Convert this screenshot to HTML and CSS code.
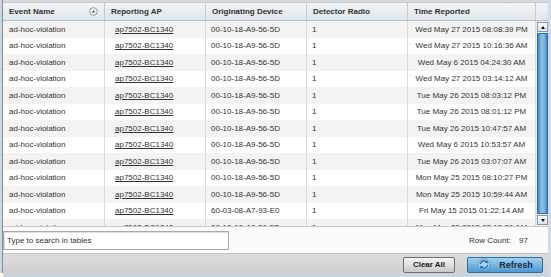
FILE: index.html
```html
<!DOCTYPE html>
<html lang="en">

<head>
    <meta charset="UTF-8">
    <title>Events</title>
    <link rel="stylesheet" href="styles.css">
</head>

<body>
    <div class="frame">
        <div class="edge"></div>
        <div class="main">
            <!-- Events table -->
            <div class="grid">
                <div class="thead">
                    <div class="th">Event Name
                        <svg class="sort" width="9" height="9" viewBox="0 0 9 9">
                            <circle cx="4.5" cy="4.5" r="3.8" fill="#f4f6f8" stroke="#7d858c" stroke-width="0.8" />
                            <path d="M2.7 5.4 L4.5 3.2 L6.3 5.4 Z" fill="#4a4f54" />
                        </svg>
                    </div>
                    <div class="th">Reporting AP</div>
                    <div class="th">Originating Device</div>
                    <div class="th">Detector Radio</div>
                    <div class="th">Time Reported</div>
                    <div class="th th-scroll"></div>
                </div>
                <div class="tbody">
                    <div class="rows">
                        <div class="tr"><span>ad-hoc-violation</span><span class="ap"><a href="#">ap7502-BC1340</a></span><span>00-10-18-A9-56-5D</span><span>1</span><span class="time">Wed May 27 2015 08:08:39 PM</span></div>
                        <div class="tr"><span>ad-hoc-violation</span><span class="ap"><a href="#">ap7502-BC1340</a></span><span>00-10-18-A9-56-5D</span><span>1</span><span class="time">Wed May 27 2015 10:16:36 AM</span></div>
                        <div class="tr"><span>ad-hoc-violation</span><span class="ap"><a href="#">ap7502-BC1340</a></span><span>00-10-18-A9-56-5D</span><span>1</span><span class="time">Wed May 6 2015 04:24:30 AM</span></div>
                        <div class="tr"><span>ad-hoc-violation</span><span class="ap"><a href="#">ap7502-BC1340</a></span><span>00-10-18-A9-56-5D</span><span>1</span><span class="time">Wed May 27 2015 03:14:12 AM</span></div>
                        <div class="tr"><span>ad-hoc-violation</span><span class="ap"><a href="#">ap7502-BC1340</a></span><span>00-10-18-A9-56-5D</span><span>1</span><span class="time">Tue May 26 2015 08:03:12 PM</span></div>
                        <div class="tr"><span>ad-hoc-violation</span><span class="ap"><a href="#">ap7502-BC1340</a></span><span>00-10-18-A9-56-5D</span><span>1</span><span class="time">Tue May 26 2015 08:01:12 PM</span></div>
                        <div class="tr"><span>ad-hoc-violation</span><span class="ap"><a href="#">ap7502-BC1340</a></span><span>00-10-18-A9-56-5D</span><span>1</span><span class="time">Tue May 26 2015 10:47:57 AM</span></div>
                        <div class="tr"><span>ad-hoc-violation</span><span class="ap"><a href="#">ap7502-BC1340</a></span><span>00-10-18-A9-56-5D</span><span>1</span><span class="time">Wed May 6 2015 10:53:57 AM</span></div>
                        <div class="tr"><span>ad-hoc-violation</span><span class="ap"><a href="#">ap7502-BC1340</a></span><span>00-10-18-A9-56-5D</span><span>1</span><span class="time">Tue May 26 2015 03:07:07 AM</span></div>
                        <div class="tr"><span>ad-hoc-violation</span><span class="ap"><a href="#">ap7502-BC1340</a></span><span>00-10-18-A9-56-5D</span><span>1</span><span class="time">Mon May 25 2015 08:10:27 PM</span></div>
                        <div class="tr"><span>ad-hoc-violation</span><span class="ap"><a href="#">ap7502-BC1340</a></span><span>00-10-18-A9-56-5D</span><span>1</span><span class="time">Mon May 25 2015 10:59:44 AM</span></div>
                        <div class="tr"><span>ad-hoc-violation</span><span class="ap"><a href="#">ap7502-BC1340</a></span><span>60-03-08-A7-93-E0</span><span>1</span><span class="time">Fri May 15 2015 01:22:14 AM</span></div>
                        <div class="tr"><span>ad-hoc-violation</span><span class="ap"><a href="#">ap7502-BC1340</a></span><span>00-10-18-A9-56-5D</span><span>1</span><span class="time">Mon May 25 2015 03:15:36 AM</span></div>
                    </div>
                    <!-- Scrollbar -->
                    <div class="scrollbar">
                        <div class="sb-btn"><span class="arrow-up"></span></div>
                        <div class="sb-thumb"></div>
                        <div class="sb-btn"><span class="arrow-down"></span></div>
                    </div>
                </div>
            </div>

            <!-- Search and count -->
            <div class="info">
                <input type="text" class="search" value="Type to search in tables">
                <div class="count">Row Count: <span class="count-num">97</span></div>
            </div>

            <!-- Buttons -->
            <div class="actions">
                <button class="btn btn-clear">Clear All</button>
                <button class="btn btn-refresh">
                    <svg width="14" height="13" viewBox="0 0 14 13">
                        <circle cx="7" cy="6.5" r="5.6" fill="#a9d3f2" stroke="#4f93c8" stroke-width="0.8" />
                        <path d="M3.4 6 A3.6 3.6 0 0 1 9.8 4.2" fill="none" stroke="#1f5f99" stroke-width="1.3" />
                        <path d="M10.8 2.6 L10.6 5.4 L8 4.6 Z" fill="#1f5f99" />
                        <path d="M10.6 7 A3.6 3.6 0 0 1 4.2 8.8" fill="none" stroke="#1f5f99" stroke-width="1.3" />
                        <path d="M3.2 10.4 L3.4 7.6 L6 8.4 Z" fill="#1f5f99" />
                    </svg>
                    Refresh
                </button>
            </div>
        </div>
    </div>
</body>

</html>
```

FILE: styles.css
```css
/* General page */
body {
    margin: 0;
    width: 551px;
    height: 277px;
    overflow: hidden;
    font-family: "Liberation Sans", Arial, sans-serif;
    font-size: 8px;
    color: #333;
    background-color: #fff;
}

.frame {
    display: flex;
    height: 277px;
}

.edge {
    width: 3px;
    background-color: #c9d8e4;
    border-right: 1px solid #8c8c8c;
    margin-bottom: 4px;
}

.main {
    flex: 1;
    display: flex;
    flex-direction: column;
    border-top: 2px solid #d6dadd;
    border-right: 3px solid #d3dce4;
    border-bottom: 2px solid #c3d6e5;
}

/* Table */
.grid {
    display: flex;
    flex-direction: column;
    border-top: 1px solid #c4c9cd;
    border-bottom: 1px solid #c8c8c8;
}

.thead,
.tr {
    display: grid;
    grid-template-columns: 102px 101px 101px 101px 128px;
}

.thead {
    grid-template-columns: 102px 101px 101px 101px 128px 11px;
    height: 17px;
    background: linear-gradient(#f1f4f7, #dfe6ec);
    border-bottom: 1px solid #b8c2cb;
}

.th {
    display: flex;
    align-items: center;
    justify-content: space-between;
    padding: 0 4px 0 6px;
    font-weight: bold;
    color: #333;
    border-right: 1px solid #c3ccd4;
}

.th-scroll {
    border-right: none;
    padding: 0;
}

.sort {
    margin-right: 2px;
}

.tbody {
    display: flex;
    height: 205px;
    overflow: hidden;
}

.rows {
    width: 533px;
}

.tr {
    height: 16.5px;
    align-items: center;
}

.tr:nth-child(odd) {
    background-color: #f3f3f3;
}

.tr span {
    height: 100%;
    display: flex;
    align-items: center;
    padding-left: 6px;
    border-right: 1px solid #dadada;
    white-space: nowrap;
}

.tr .ap {
    padding-left: 10px;
}

.tr span:nth-child(3),
.tr span:nth-child(4) {
    padding-left: 5px;
}

.tr .time {
    justify-content: center;
    padding-left: 0;
}

.ap a {
    color: #333;
    text-decoration: underline;
}

/* Scrollbar */
.scrollbar {
    width: 11px;
    display: flex;
    flex-direction: column;
    padding: 1px 0 1px 1px;
    background-color: #e9eef2;
}

.sb-btn {
    height: 8px;
    background: linear-gradient(#ffffff, #dde3e8);
    border: 1px solid #8899a6;
    display: flex;
    align-items: center;
    justify-content: center;
}

.arrow-up {
    border-left: 2px solid transparent;
    border-right: 2px solid transparent;
    border-bottom: 3px solid #111;
}

.arrow-down {
    border-left: 2px solid transparent;
    border-right: 2px solid transparent;
    border-top: 3px solid #111;
}

.sb-thumb {
    flex: 1;
    background: linear-gradient(90deg, #3e86c0, #8ec1e6 40%, #7ab4df 70%, #3e86c0);
    border: 1px solid #2f6f9f;
    margin: 1px 0;
}

/* Search and row count */
.info {
    display: flex;
    align-items: center;
    justify-content: space-between;
    height: 26px;
    padding-right: 20px;
    background-color: #fbfbfb;
}

.search {
    width: 218px;
    height: 17px;
    margin: 0;
    padding: 0 3px;
    font-family: "Liberation Sans", Arial, sans-serif;
    font-size: 8px;
    color: #333;
    border: 1px solid #a9a9a9;
    box-shadow: inset 1px 1px 1px #ddd;
}

.count-num {
    margin-left: 6px;
}

/* Bottom buttons */
.actions {
    flex: 1;
    display: flex;
    align-items: center;
    justify-content: flex-end;
    gap: 12px;
    padding-right: 5px;
    background: linear-gradient(#dcdcdc, #d0d0d0);
    border-top: 1px solid #c4c4c4;
}

.btn {
    height: 16px;
    font-family: "Liberation Sans", Arial, sans-serif;
    font-weight: bold;
    border-radius: 2px;
    cursor: pointer;
    display: flex;
    align-items: center;
    justify-content: center;
    padding: 0;
}

.btn-clear {
    width: 52px;
    font-size: 8px;
    color: #222;
    background: linear-gradient(#f6f6f6, #c9c9c9);
    border: 1px solid #6f6f6f;
}

.btn-refresh {
    width: 76px;
    gap: 8px;
    font-size: 9px;
    color: #1c2b3a;
    background: linear-gradient(#9fd0f2, #4c9ad6);
    border: 1px solid #2d6c9c;
}
```
